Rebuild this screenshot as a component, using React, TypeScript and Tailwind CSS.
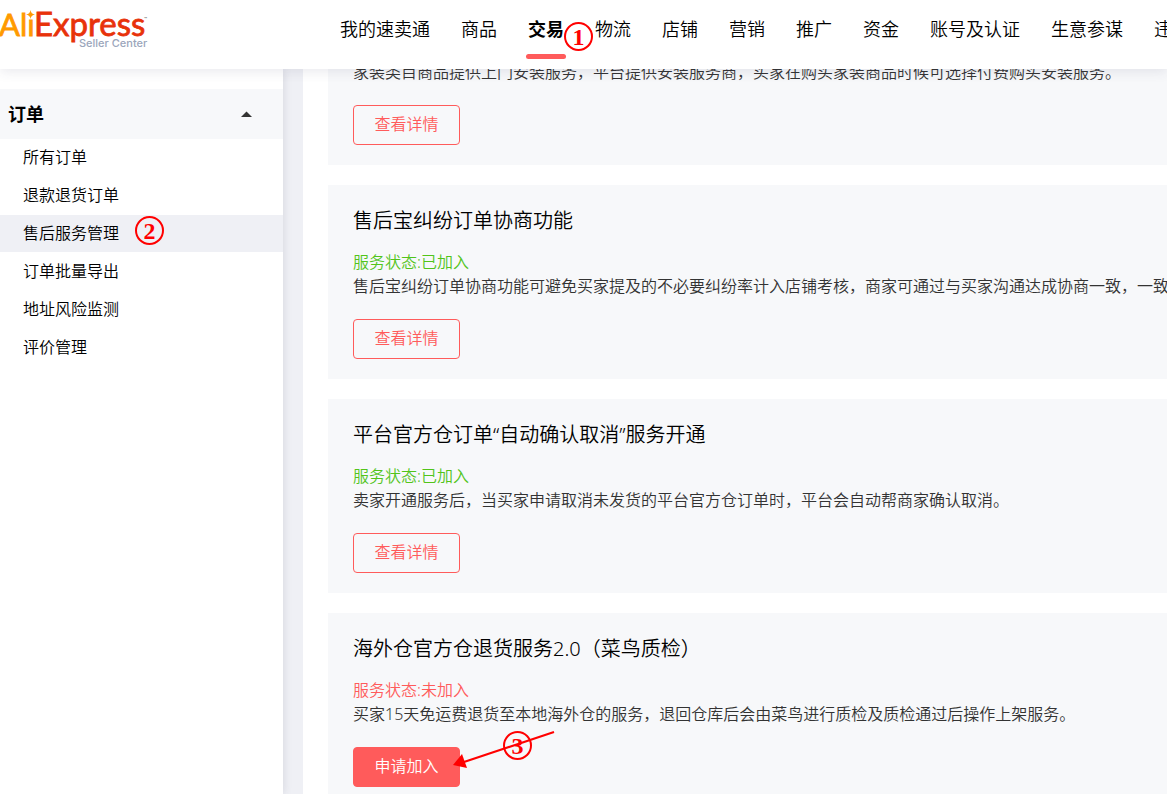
import React from 'react'
import clsx from 'clsx'

type Service = {
  title?: string
  status?: string
  joined: boolean
  description: string
  action: string
}

const navItems = ['我的速卖通', '商品', '交易', '物流', '店铺', '营销', '推广', '资金', '账号及认证', '生意参谋', '违规']

const menuItems = ['所有订单', '退款退货订单', '售后服务管理', '订单批量导出', '地址风险监测', '评价管理']

const services: Service[] = [
  {
    joined: true,
    description: '家装类目商品提供上门安装服务，平台提供安装服务商，买家在购买家装商品时候可选择付费购买安装服务。',
    action: '查看详情',
  },
  {
    title: '售后宝纠纷订单协商功能',
    status: '已加入',
    joined: true,
    description: '售后宝纠纷订单协商功能可避免买家提及的不必要纠纷率计入店铺考核，商家可通过与买家沟通达成协商一致，一致',
    action: '查看详情',
  },
  {
    title: '平台官方仓订单“自动确认取消”服务开通',
    status: '已加入',
    joined: true,
    description: '卖家开通服务后，当买家申请取消未发货的平台官方仓订单时，平台会自动帮商家确认取消。',
    action: '查看详情',
  },
  {
    title: '海外仓官方仓退货服务2.0（菜鸟质检）',
    status: '未加入',
    joined: false,
    description: '买家15天免运费退货至本地海外仓的服务，退回仓库后会由菜鸟进行质检及质检通过后操作上架服务。',
    action: '申请加入',
  },
]

function Logo() {
  return (
    <svg width="152" height="52" viewBox="0 0 152 52" role="img" aria-label="AliExpress Seller Center">
      <g fontFamily="Lato, sans-serif" fontWeight="400">
        <text x="-1" y="36" fontSize="31" fill="#ff9a00" stroke="#ff9a00" strokeWidth="0.8">Alı</text>
        <text x="34" y="36" fontSize="33" fill="#e8320a" stroke="#e8320a" strokeWidth="0.8">Express</text>
      </g>
      <path d="M30.500 10 Q31 14 35 14.500 Q31 15 30.500 19 Q30 15 26 14.500 Q30 14 30.500 10Z" fill="#ff9a00" />
      <text x="79" y="47" fill="#9ba6bb" fontFamily="Inter, sans-serif" fontSize="11" fontWeight="500">Seller Center</text>
      <text x="144" y="21" fill="#555555" fontFamily="Inter, sans-serif" fontSize="5" fontWeight="400">™</text>
    </svg>
  )
}

function Step({ n, className }: { n: number; className: string }) {
  return (
    <span
      className={clsx(
        'absolute flex h-[29px] w-[29px] items-center justify-center rounded-full border-2 border-[#ff0000] font-["Liberation_Serif",serif] text-2xl leading-none font-bold text-[#ff0000]',
        className,
      )}
    >
      {n}
    </span>
  )
}

function Header() {
  return (
    <header className="relative z-20 flex h-[69px] shrink-0 items-start bg-white shadow-[0_2px_12px_rgba(60,60,100,0.12)]">
      <a href="#" className="w-[340px] shrink-0">
        <Logo />
      </a>
      <nav className="flex gap-[31px] pt-3.5 text-lg leading-[30px] text-black">
        {navItems.map((item) => (
          <a key={item} href="#" className={clsx('relative shrink-0 whitespace-nowrap', item === '交易' && 'font-bold')}>
            {item}
            {item === '交易' && (
              <>
                <span className="absolute top-10 -left-0.5 h-[5px] w-10 rounded-full bg-[#ff5b5b]" />
                <Step n={1} className="top-2 left-9" />
              </>
            )}
          </a>
        ))}
      </nav>
    </header>
  )
}

function Sidebar() {
  return (
    <aside className="relative z-10 w-[283px] shrink-0 bg-white pt-5 shadow-[1px_0_8px_rgba(60,60,80,0.12)]">
      <button className="flex h-[50px] w-full items-center justify-between bg-[#f7f8fa] pr-[31px] pl-2 text-lg font-bold text-black">
        订单
        <svg width="11" height="6" viewBox="0 0 11 6" fill="#333333">
          <path d="M5.500 0.500 11 6H0Z" />
        </svg>
      </button>
      <ul className="flex flex-col gap-px">
        {menuItems.map((item) => (
          <li key={item} className={clsx('relative', item === '售后服务管理' && 'bg-[#eff0f5]')}>
            <a href="#" className="block pl-[23px] text-base leading-[37px] text-black">
              {item}
            </a>
            {item === '售后服务管理' && <Step n={2} className="top-px left-[135px]" />}
          </li>
        ))}
      </ul>
    </aside>
  )
}

function ServiceCard({ service }: { service: Service }) {
  return (
    <section className={clsx('bg-[#f7f8fa] px-[25px] pb-5', service.title && 'pt-[21px]')}>
      {service.title && <h2 className="mb-3.5 text-xl leading-[30px] text-black">{service.title}</h2>}
      {service.status && (
        <p className={clsx('leading-6', service.joined ? 'text-[#52c41a]' : 'text-[#ff5b5b]')}>
          服务状态:{service.status}
        </p>
      )}
      <p className="leading-6 whitespace-nowrap text-[#333333]">{service.description}</p>
      <div className="relative mt-[21px]">
        <button
          className={clsx(
            'flex h-10 w-[107px] justify-center rounded border border-[#ff5b5b] text-base leading-9',
            service.joined ? 'text-[#ff5b5b]' : 'bg-[#ff5b5b] text-white',
          )}
        >
          {service.action}
        </button>
        {!service.joined && (
          <>
            <Step n={3} className="-top-4 left-[150px]" />
            <svg className="absolute -top-4 left-[100px]" width="104" height="42" viewBox="0 0 104 42">
              <path d="M101 1 8 32" stroke="#ff0000" strokeWidth="2" />
              <path d="M0 34 9 23 14 37Z" fill="#ff0000" />
            </svg>
          </>
        )}
      </div>
    </section>
  )
}

export default function App() {
  return (
    <div className="flex h-screen flex-col overflow-hidden bg-[#eff0f5] font-['Noto_Sans','Noto_Sans_CJK_SC',sans-serif] text-base font-[350]">
      <Header />
      <div className="flex min-h-0 flex-1">
        <Sidebar />
        <main className="ml-5 min-w-0 flex-1 overflow-hidden bg-white pl-[25px]">
          {/* the list is scrolled a little under the header */}
          <div className="-mt-[9px] flex flex-col gap-5">
            {services.map((service) => (
              <ServiceCard key={service.description} service={service} />
            ))}
          </div>
        </main>
      </div>
    </div>
  )
}
